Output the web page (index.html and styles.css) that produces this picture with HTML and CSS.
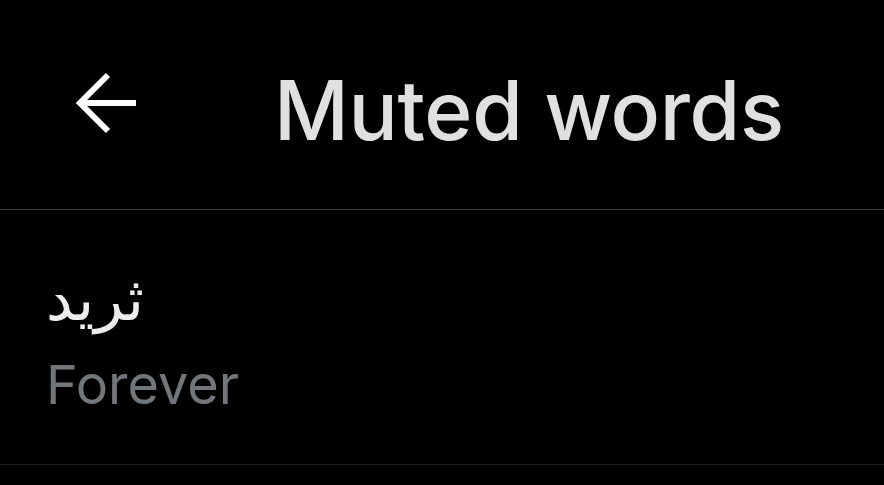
FILE: index.html
```html
<!DOCTYPE html>
<html lang="en">
<head>
    <meta charset="UTF-8">
    <meta name="viewport" content="width=device-width, initial-scale=1.0">
    <title>Muted words</title>
    <link rel="stylesheet" href="styles.css">
</head>
<body>

<div class="header">
    <button class="back" type="button" aria-label="Back">
        <svg width="64" height="64" viewBox="0 0 64 64">
            <path d="M62 32H6M34 4L6 32L34 60" fill="none" stroke="#fff" stroke-width="6"/>
        </svg>
    </button>
    <h1 class="title">Muted words</h1>
</div>

<div class="word-row">
    <div class="word" dir="rtl">ثريد</div>
    <div class="duration">Forever</div>
</div>

</body>
</html>
```

FILE: styles.css
```css
body {
    margin: 0;
    background-color: #000;
    font-family: Inter, "Noto Sans", sans-serif;
    overflow: hidden;
}
.header {
    height: 209px;
    display: flex;
    align-items: center;
    border-bottom: 1px solid #3a3b3d;
}
.back {
    background: none;
    border: none;
    padding: 0;
    margin-left: 74px;
    width: 64px;
    height: 64px;
    display: flex;
    margin-top: -4px;
}
.title {
    margin: 12px 0 0 136px;
    font-size: 82px;
    font-weight: 500;
    color: #e0e0e0;
    letter-spacing: -0.3px;
}
.word-row {
    height: 255px;
    box-sizing: border-box;
    padding: 56px 0 0 46px;
    border-bottom: 1px solid #1c1d20;
}
.word {
    text-align: left;
    font-family: "DejaVu Sans", sans-serif;
    font-size: 60px;
    line-height: 66px;
    color: #ececec;
}
.duration {
    font-size: 54px;
    line-height: 70px;
    color: #71767b;
    margin-top: 18px;
}
```
